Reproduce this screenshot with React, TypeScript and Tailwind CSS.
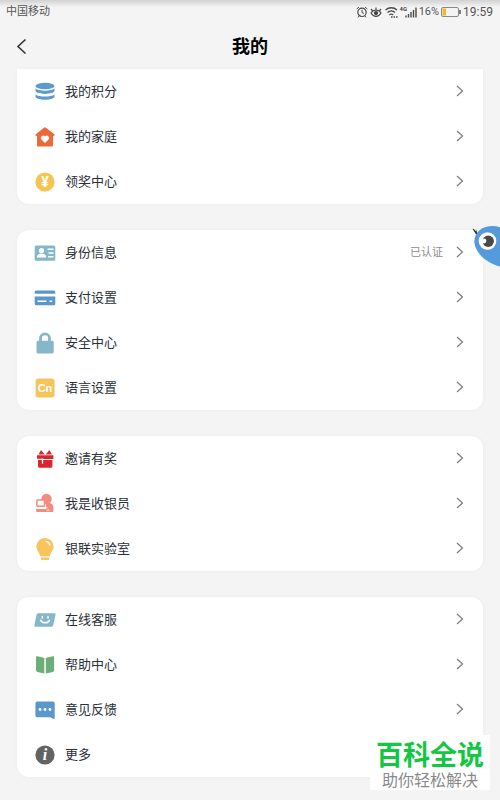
import React from "react";

type IconProps = { children: React.ReactNode };

function Icon({ children }: IconProps) {
  return (
    <svg viewBox="0 0 22 22" className="size-[22px] shrink-0" fill="none" aria-hidden="true">
      {children}
    </svg>
  );
}

const icons = {
  points: (
    <Icon>
      <g fill="#5b9acb">
        <ellipse cx="11" cy="5" rx="9.5" ry="3.2" />
        <path d="M1.500 7.600c3 2.700 16 2.700 19 0v2.500c-1 3.700-18 3.700-19 0z" />
        <path d="M1.500 13.400c3 2.700 16 2.700 19 0v2.300c-1 4-18 4-19 0z" />
      </g>
    </Icon>
  ),
  family: (
    <Icon>
      <path d="M10 1.800a1.500 1.500 0 0 1 2 0l8 6.200c1 .9.600 1.900-.6 1.900h-.4v9c0 1-.5 1.500-1.500 1.500h-13c-1 0-1.500-.5-1.500-1.500v-9h-.4c-1.200 0-1.600-1-.6-1.900z" fill="#eb6a3a" />
      <path d="M11 17l-3.600-3.500a2.300 2.300 0 0 1 3.600-2.900 2.300 2.300 0 0 1 3.600 2.900z" fill="#fff" />
    </Icon>
  ),
  prize: (
    <Icon>
      <circle cx="11" cy="11" r="9.600" fill="#f5c451" />
      <text x="11" y="16" textAnchor="middle" fill="#fff" className="font-[Roboto] text-[14px] font-bold">¥</text>
    </Icon>
  ),
  identity: (
    <Icon>
      <rect x=".7" y="3.500" width="20.600" height="15.300" rx="1.500" fill="#86b7c8" />
      <circle cx="7.500" cy="8.600" r="2.700" fill="#fff" />
      <path d="M2.800 15.400c0-2.500 2-3.600 4.700-3.900 2.700.3 4.700 1.400 4.700 3.900z" fill="#fff" />
      <path d="M13.500 7.300h6M14.500 11h5M14 14.700h5.500" stroke="#fff" strokeWidth="1.600" />
    </Icon>
  ),
  payment: (
    <Icon>
      <path d="M.7 6.700v-1.700q0-1.500 1.500-1.500h17.600q1.500 0 1.500 1.500v1.700zM.7 9.500h20.600v7.300q0 1.500-1.500 1.500H2.200q-1.500 0-1.500-1.500z" fill="#5b96c8" />
      <path d="M3.500 14.200h9M15.500 14.200h2.700" stroke="#fff" strokeWidth="1.400" />
    </Icon>
  ),
  security: (
    <Icon>
      <path d="M6.500 11V6.300a4.500 4.500 0 0 1 9 0V11" stroke="#86b7c8" strokeWidth="2.800" />
      <rect x="2.500" y="8.800" width="17.200" height="12.700" rx="1.500" fill="#86b7c8" />
    </Icon>
  ),
  language: (
    <Icon>
      <rect x="1.600" y="1.500" width="19" height="19" rx="3" fill="#f5c45b" />
      <text x="11" y="15" textAnchor="middle" fill="#fff" className="font-['Liberation_Sans'] text-[11px] font-bold">Cn</text>
    </Icon>
  ),
  invite: (
    <Icon>
      <path d="M3 7.300h16.400v3.600H3zM4 12h14.400v6.200q0 1.600-1.600 1.600H5.600Q4 19.800 4 18.200zM4.500 6.500L7 2l3.700 4.500zM11.700 6.500L15.400 2l2.500 4.500z" fill="#d9252d" />
      <path d="M8.500 10.500v5.300M3 11.400h6" stroke="#fff" strokeWidth="1.300" />
    </Icon>
  ),
  cashier: (
    <Icon>
      <circle cx="12.500" cy="6" r="5.200" fill="#f28c80" />
      <path d="M12 9.500c5 0 7.400 1.500 7.400 5v3.100q0 1.500-1.500 1.500H3.500Q2 19.100 2 17.600v-1.500h10z" fill="#f28c80" />
      <rect x="2.900" y="7" width="7.600" height="6.200" rx=".8" fill="#fff" stroke="#f28c80" strokeWidth="1.600" />
      <path d="M2.500 14.800h11M12.500 17.200h3" stroke="#fff" strokeWidth=".9" />
    </Icon>
  ),
  lab: (
    <Icon>
      <path d="M11 0a8.600 8.600 0 0 1 8.600 8.600c0 4.200-3.100 5.700-3.700 9.700H6.100c-.6-4-3.700-5.500-3.700-9.700A8.600 8.600 0 0 1 11 0z" fill="#f7c55c" />
      <path d="M6.800 19.500h8.400v1.300q0 1.200-1.200 1.200H8q-1.200 0-1.200-1.200z" fill="#f7c55c" />
      <path d="M12 3.400c2.200.4 3.500 1.700 3.900 3.800" stroke="#fff" strokeWidth="1.300" strokeLinecap="round" />
    </Icon>
  ),
  service: (
    <Icon>
      <path d="M4.200 4.300h16.200q1.500 0 1.200 1.500l-2.400 10.500q-.4 1.500-1.900 1.500H1.600q-1.500 0-1.200-1.500L2.500 5.800q.3-1.500 1.700-1.500z" fill="#86b7c8" />
      <path d="M8.300 7.500v1.500M14 7.500v1.500M6.700 11.300c1.300 3.400 7 3.400 8.700 0" stroke="#fff" strokeWidth="1.500" strokeLinecap="round" />
    </Icon>
  ),
  help: (
    <Icon>
      <path d="M2 3.300Q2 2 3.500 2.300L10.300 4v15.600L3.500 18Q2 17.600 2 16.300zM11.800 4l6.900-1.700q1.400-.3 1.400 1v13q0 1.300-1.300 1.600l-7 1.700z" fill="#6cad78" />
    </Icon>
  ),
  feedback: (
    <Icon>
      <path d="M3 2.500h16q1.700 0 1.700 1.700V19q-.2 1.600-1.700.8L16.500 18.200H3q-1.600 0-1.600-1.600V4.200q0-1.700 1.600-1.700z" fill="#5a97cd" />
      <circle cx="6" cy="10.500" r="1.400" fill="#fff" />
      <circle cx="11" cy="10.500" r="1.400" fill="#fff" />
      <circle cx="16" cy="10.500" r="1.400" fill="#fff" />
    </Icon>
  ),
  more: (
    <Icon>
      <circle cx="11" cy="11" r="9.600" fill="#636363" />
      <text x="11" y="16" textAnchor="middle" fill="#fff" className="font-['Liberation_Serif'] text-[16px] font-bold italic">i</text>
    </Icon>
  ),
};

type Item = { icon: keyof typeof icons; label: string; note?: string };

const groups: Item[][] = [
  [
    { icon: "points", label: "我的积分" },
    { icon: "family", label: "我的家庭" },
    { icon: "prize", label: "领奖中心" },
  ],
  [
    { icon: "identity", label: "身份信息", note: "已认证" },
    { icon: "payment", label: "支付设置" },
    { icon: "security", label: "安全中心" },
    { icon: "language", label: "语言设置" },
  ],
  [
    { icon: "invite", label: "邀请有奖" },
    { icon: "cashier", label: "我是收银员" },
    { icon: "lab", label: "银联实验室" },
  ],
  [
    { icon: "service", label: "在线客服" },
    { icon: "help", label: "帮助中心" },
    { icon: "feedback", label: "意见反馈" },
    { icon: "more", label: "更多" },
  ],
];

function Row({ icon, label, note }: Item) {
  return (
    <li>
      <button type="button" className="flex h-[45px] w-full items-center gap-[9px] pr-[19px] pl-[17px] text-left">
        {icons[icon]}
        <span className="flex-1 text-[13px] leading-5 text-[#2b2f38]">{label}</span>
        {note && <span className="mr-1 text-[11px] leading-5 text-[#8d8d8d]">{note}</span>}
        <svg viewBox="0 0 8 13" className="h-[13px] w-2 shrink-0" fill="none" aria-hidden="true">
          <path d="M1 1l5.500 5L1 11" stroke="#7c7c7c" strokeWidth="1.200" />
        </svg>
      </button>
    </li>
  );
}

function StatusBar() {
  return (
    <div className="flex h-6 items-center justify-between bg-linear-to-b from-[#d2d2d2] via-[#f4f4f4] via-30% to-[#f4f4f4] pr-[7px] pl-[6px] text-[11px] leading-5 text-[#555]">
      <span>中国移动</span>
      <div className="flex items-center gap-[2px]">
        <svg viewBox="0 0 66 14" className="h-[14px] w-[66px]" fill="none" stroke="#484848" aria-hidden="true">
          <circle cx="7" cy="7.300" r="4.200" strokeWidth="1.200" />
          <path d="M7 4.800v2.700l2 1M1.700 4l2.300-2M12.300 4L10 2M4 11l-1 1.300M10 11l1 1.300" />
          <path d="M16 8c2.500-4 7.500-4 10 0-2.500 4.500-7.500 4.500-10 0zM21 5V2.500M17.800 6L16 4M24.200 6L26 4" strokeWidth="1.200" />
          <circle cx="21" cy="8" r="1.700" fill="#484848" />
          <path d="M30.500 5c3.300-3 8.300-3 11.500 0M32.500 7.500c2.200-2 5.400-2 7.500 0M34.300 10c1.200-1 2.700-1 3.900 0" strokeWidth="1.300" />
          <path d="M36 12h1.500M38.500 12H40M41 12h1.500" strokeWidth="1.500" />
          <text x="44.500" y="6" fill="#484848" stroke="none" className="font-[Roboto] text-[6px] font-bold">4G</text>
          <path d="M51 10.500v2M53.500 9v3.500M56 7v5.500M58.500 5v7.500M61 2.500v10" strokeWidth="1.400" />
        </svg>
        <span className="-ml-1">16%</span>
        <svg viewBox="0 0 20 10" className="h-[10px] w-5" fill="none" aria-hidden="true">
          <rect x=".5" y=".5" width="17" height="9" rx="1.500" stroke="#888" />
          <path d="M1.500 1.500h3.500v7H1.500z" fill="#f3b52f" />
          <path d="M19 3v4" stroke="#555" strokeWidth="1.500" />
        </svg>
        <span className="text-xs leading-5">19:59</span>
      </div>
    </div>
  );
}

export default function App() {
  return (
    <div className="relative min-h-screen bg-[#f4f4f4] pb-[23px] font-[Roboto,'Noto_Sans_CJK_SC',sans-serif]">
      <StatusBar />
      <header className="grid h-[45px] grid-cols-[1fr_auto_1fr] items-center px-4">
        <button type="button" aria-label="返回" className="justify-self-start">
          <svg viewBox="0 0 12 18" className="h-[18px] w-3" fill="none" aria-hidden="true">
            <path d="M9.500 1.500L2 8.500l7.500 7" stroke="#333" strokeWidth="1.600" />
          </svg>
        </button>
        <h1 className="text-lg font-bold text-black">我的</h1>
      </header>
      <main className="flex flex-col gap-[26px] px-[17px]">
        {groups.map((items, i) => (
          <ul key={i} className="rounded-xl bg-white shadow-[0_0_4px_rgba(0,0,0,0.04)] first:rounded-t-none">
            {items.map((item) => (
              <Row key={item.label} {...item} />
            ))}
          </ul>
        ))}
      </main>

      <button type="button" aria-label="助手" className="absolute top-[225px] right-0">
        <svg viewBox="0 0 30 44" className="h-11 w-[30px]" fill="none" aria-hidden="true">
          <path d="M30 2.200C18-1.500 4.200 4 4.300 17 5 28 17 38.500 30 41.500z" fill="#559bdc" />
          <circle cx="17.500" cy="16" r="8.800" fill="#fff" />
          <circle cx="18.200" cy="16.200" r="5.700" fill="#484848" />
          <circle cx="14" cy="16" r="2.400" fill="#fff" />
          <path d="M6.500 9L3.300 4M6.500 9L6 5.500" stroke="#333" strokeWidth="1.300" />
        </svg>
      </button>

      <aside className="absolute right-[10px] bottom-[10px] flex h-[55px] w-[120px] flex-col items-center bg-white">
        <strong className="mt-1 text-[27px] leading-[34px] font-bold text-[#12c742]">百科全说</strong>
        <span className="text-base leading-4 text-[#8a8a8a]">助你轻松解决</span>
      </aside>
    </div>
  );
}
